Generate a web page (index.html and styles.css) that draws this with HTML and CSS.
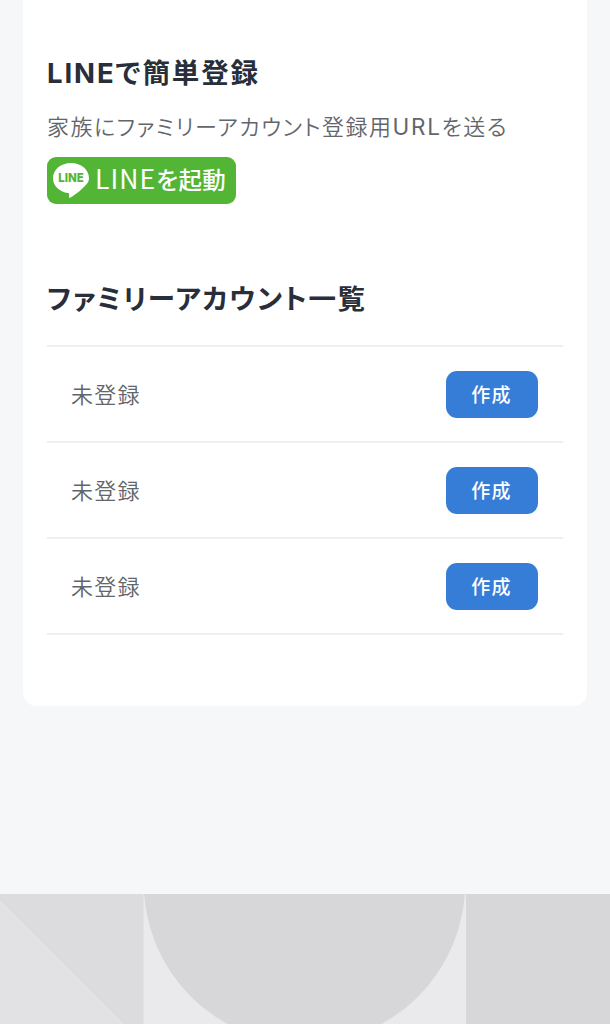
FILE: index.html
```html
<!DOCTYPE html>
<html lang="ja">
<head>
<meta charset="utf-8">
<title>ファミリーアカウント</title>
<link rel="stylesheet" href="styles.css">
</head>
<body>
<main class="card">
  <section class="invite">
    <h2 class="title"><span class="latin">LINE</span>で簡単登録</h2>
    <p class="lead">家族にファミリーアカウント登録用<span class="latin">URL</span>を送る</p>
    <a class="line-button">
      <svg class="line-logo" width="38" height="37" viewBox="0 0 38 37">
        <path fill="#fff" d="M19 1C9 1 1 7.600 1 16.200c0 7.600 6.300 13.600 15 14.800 1.500.3 1.300 1 1 2.900-.2 1.300-.1 2.400 1.600 1.500 1.600-.8 8.600-5.600 12.500-9.700C35 22.300 37 19.500 37 16.200 37 7.600 29 1 19 1z"/>
        <text class="logo-text" x="19" y="20.300" text-anchor="middle" textLength="25.500" lengthAdjust="spacingAndGlyphs">LINE</text>
      </svg>
      <span class="line-label"><span class="line-word">LINE</span>を起動</span>
    </a>
  </section>
  <section class="accounts">
    <h2 class="title">ファミリーアカウント一覧</h2>
    <ul class="list">
      <li class="row"><span>未登録</span><button class="create">作成</button></li>
      <li class="row"><span>未登録</span><button class="create">作成</button></li>
      <li class="row"><span>未登録</span><button class="create">作成</button></li>
    </ul>
  </section>
</main>
<footer class="pattern">
  <svg width="610" height="130" viewBox="0 0 610 130">
    <rect width="610" height="130" fill="#eaeaec"/>
    <rect width="143.500" height="130" fill="#dcdcde"/>
    <path d="M0 6L124 130H0z" fill="#e2e2e4"/>
    <circle cx="304.500" cy="-11" r="160.700" fill="#d7d7d9"/>
    <rect x="466" width="144" height="130" fill="#d7d7d9"/>
  </svg>
</footer>
</body>
</html>
```
FILE: styles.css
```css
* { box-sizing: border-box; }
body {
  margin: 0;
  height: 1024px;
  overflow: hidden;
  display: flex;
  flex-direction: column;
  justify-content: space-between;
  background: #f5f7f9;
  color: #62666b;
  font-family: "Noto Sans CJK JP", sans-serif;
  font-feature-settings: "palt";
}
.card {
  height: 705.500px;
  margin: 0 23px;
  padding: 50px 24px 0;
  background: #fff;
  border-radius: 0 0 14px 14px;
}
.latin { font-family: Inter, sans-serif; }
.title {
  margin: 0;
  height: 42px;
  font-size: 27.500px;
  line-height: 42px;
  font-weight: 700;
  letter-spacing: 1.600px;
  color: #282e3a;
  white-space: nowrap;
}
.invite .title { letter-spacing: 1.900px; }
.lead {
  margin: 13px 0 0;
  height: 40px;
  font-size: 22px;
  line-height: 40px;
  font-weight: 350;
  letter-spacing: 1.500px;
  white-space: nowrap;
}
.lead .latin { letter-spacing: 1.700px; font-size: 22.500px; font-weight: 400; }
.line-button {
  display: flex;
  align-items: center;
  width: 189px;
  height: 47.500px;
  margin-top: 11.500px;
  padding-left: 5px;
  border-radius: 9px;
  background: #53b535;
  color: #fff;
}
.logo-text {
  font: 800 12px Inter, sans-serif;
  fill: #53b535;
}
.line-label {
  height: 48px;
  margin: -4px 0 0 5px;
  font-size: 23.500px;
  line-height: 48px;
  font-weight: 500;
  letter-spacing: 0.400px;
  white-space: nowrap;
}
.line-word { font-size: 26.500px; font-weight: 400; letter-spacing: 1.100px; }
.accounts { margin-top: 72px; }
.list {
  list-style: none;
  margin: 27px 0 0;
  padding: 0;
  border-top: 2px solid #eeeff0;
}
.row {
  display: flex;
  align-items: center;
  justify-content: space-between;
  height: 96px;
  padding: 0 25px 0 24px;
  border-bottom: 2px solid #eeeff0;
  font-size: 22px;
  line-height: 32px;
  font-weight: 350;
  letter-spacing: 1.300px;
}
.row > span { margin-top: -2px; }
.create {
  width: 92px;
  height: 47px;
  border: 0;
  border-radius: 11px;
  padding: 0 1px 2px 0;
  background: #367dd8;
  color: #fff;
  font: 500 19px "Noto Sans CJK JP", sans-serif;
  letter-spacing: 1.200px;
}
.pattern { height: 130px; }
.pattern svg { display: block; }
```
